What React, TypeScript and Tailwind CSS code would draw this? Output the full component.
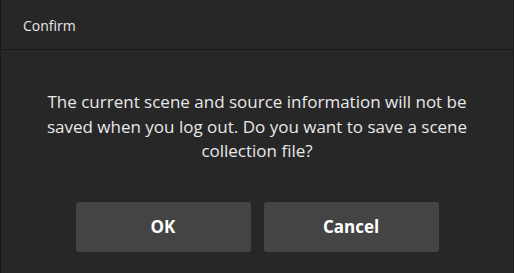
export default function App() {
  return (
    <div className="w-[514px] h-[273px] bg-[#272727] border-x border-[#1a1a1a] flex flex-col text-[#e8e8e8] font-['Open_Sans',sans-serif]">
      <div className="h-[50px] shrink-0 flex items-center pl-[22px] pt-[2px] text-[14px] border-b border-[#181818]">
        Confirm
      </div>
      <div className="flex flex-col items-center flex-1">
        <p className="mt-[40px] w-[424px] text-center text-[17px] leading-[24.5px]">
          The current scene and source information will not be saved when you log out. Do you want to save a scene collection file?
        </p>
        <div className="mt-[38px] flex gap-[13px]">
          <button className="w-[175px] h-[50px] rounded-[3px] bg-[#444444] text-white font-bold text-[17px]">OK</button>
          <button className="w-[175px] h-[50px] rounded-[3px] bg-[#444444] text-white font-bold text-[17px]">Cancel</button>
        </div>
      </div>
    </div>
  )
}
